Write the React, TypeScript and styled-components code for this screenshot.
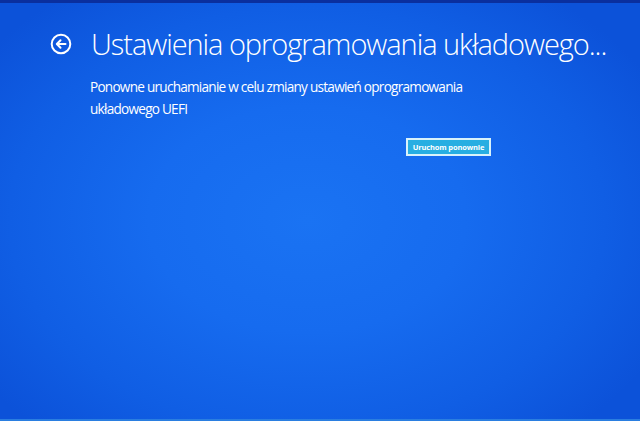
import React from "react";
import styled, { createGlobalStyle } from "styled-components";

const GlobalStyle = createGlobalStyle`
  html, body {
    margin: 0;
    padding: 0;
    height: 100%;
  }
  #root {
    height: 100%;
  }
`;

const Screen = styled.div`
  width: 640px;
  height: 421px;
  overflow: hidden;
  box-sizing: border-box;
  border-top: 3px solid #0a2f9e;
  border-bottom: 2px solid #2a7ee0;
  background:
    radial-gradient(ellipse 62% 68% at 48% 52%, #1a73f3 0%, #166bef 40%, #105ee4 75%, #0c52d9 100%);
  font-family: "Open Sans", "Noto Sans", sans-serif;
  color: #ffffff;
  padding: 21px 0 0 50px;
  display: flex;
  flex-direction: column;
`;

const Header = styled.div`
  display: flex;
  align-items: center;
  gap: 19px;
`;

const BackButton = styled.button`
  width: 22px;
  height: 22px;
  padding: 0;
  border: none;
  background: none;
  display: flex;
  align-items: center;
  justify-content: center;
  cursor: pointer;
`;

const Title = styled.h1`
  margin: 0;
  font-size: 29px;
  font-weight: 300;
  letter-spacing: -1.05px;
  line-height: 40px;
  white-space: nowrap;
`;

const Content = styled.div`
  margin-left: 40px;
  margin-top: 12px;
  width: 400px;
  display: flex;
  flex-direction: column;
`;

const Description = styled.p`
  margin: 0;
  font-size: 13.6px;
  line-height: 22px;
  font-weight: 400;
  letter-spacing: -0.75px;
`;

const Actions = styled.div`
  display: flex;
  justify-content: flex-end;
  margin-top: 18px;
`;

const RestartButton = styled.button`
  background: #27aee2;
  border: 2px solid #d8f2fb;
  color: #ffffff;
  font-family: "Open Sans", "Noto Sans", sans-serif;
  font-weight: 700;
  font-size: 7.5px;
  letter-spacing: -0.15px;
  height: 18px;
  width: 85px;
  padding: 0;
  margin-right: -1px;
  cursor: pointer;
`;

const BackIcon = () => (
  <svg width="22" height="22" viewBox="0 0 22 22" fill="none">
    <circle cx="11" cy="11" r="9.3" stroke="#ffffff" strokeWidth="2" />
    <path
      d="M15.5 11H7M10.5 7.3L6.8 11l3.7 3.7"
      stroke="#ffffff"
      strokeWidth="2"
      strokeLinecap="round"
      strokeLinejoin="round"
    />
  </svg>
);

export default function App() {
  return (
    <>
      <GlobalStyle />
      <Screen>
        <Header>
          <BackButton aria-label="Wstecz">
            <BackIcon />
          </BackButton>
          <Title>Ustawienia oprogramowania układowego...</Title>
        </Header>
        <Content>
          <Description>
            Ponowne uruchamianie w celu zmiany ustawień oprogramowania
            układowego UEFI
          </Description>
          <Actions>
            <RestartButton>Uruchom ponownie</RestartButton>
          </Actions>
        </Content>
      </Screen>
    </>
  );
}
